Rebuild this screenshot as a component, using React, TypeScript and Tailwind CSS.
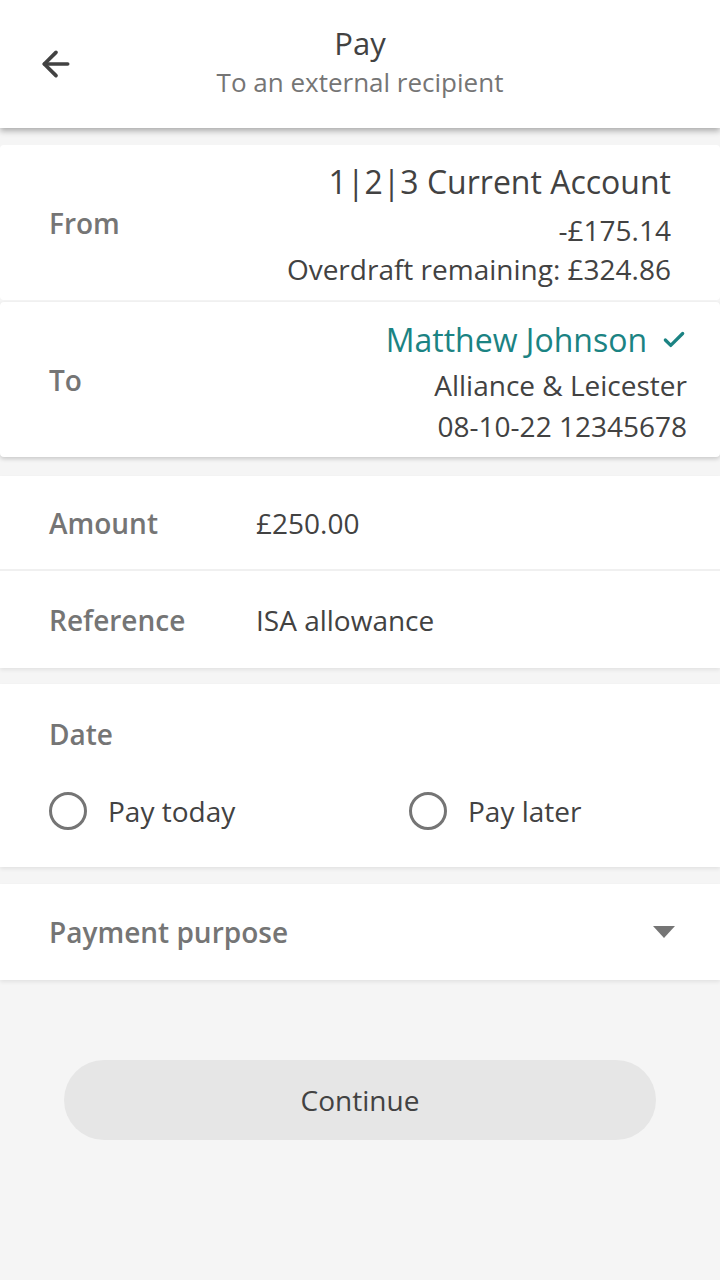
import { ArrowLeft, Check } from "lucide-react";

const font = { fontFamily: '"Open Sans", "Liberation Sans", sans-serif' };

const Radio = ({ label }: { label: string }) => (
    <div className="flex items-center gap-[21px]">
        <span className="block w-[38px] h-[38px] rounded-full border-[3px] border-[#757575]" />
        <span className="text-[28px] text-[#424242]">{label}</span>
    </div>
);

const App = () => {
    return (
        <div className="min-h-[1280px] bg-[#f5f5f5]" style={font}>
            <header className="relative h-[128px] bg-white shadow-[0_3px_6px_rgba(0,0,0,0.3)] flex flex-col items-center justify-center z-10">
                <ArrowLeft className="absolute left-[36px] top-[44px] text-[#424242]" size={40} strokeWidth={2.2} />
                <h1 className="text-[31px] leading-[40px] text-[#424242] -mt-[4px]">Pay</h1>
                <p className="text-[26px] leading-[38px] text-[#757575]">To an external recipient</p>
            </header>

            <section className="mt-[17px] bg-white rounded-[4px] h-[155px] flex items-center pl-[49px] pr-[49px]">
                <span className="text-[28px] font-semibold text-[#757575]">From</span>
                <div className="ml-auto -mt-[4px] flex flex-col items-end text-[#424242]">
                    <span className="text-[32px] leading-[48px]">1|2|3 Current Account</span>
                    <span className="text-[28px] leading-[48px]">-£175.14</span>
                    <span className="text-[28px] leading-[30px]">Overdraft remaining: £324.86</span>
                </div>
            </section>

            <section className="mt-[2px] bg-white rounded-[4px] h-[155px] flex items-center pl-[49px] pr-[33px] shadow-[0_2px_4px_rgba(0,0,0,0.18)]">
                <span className="text-[28px] font-semibold text-[#757575]">To</span>
                <div className="ml-auto pt-[3px] flex flex-col items-end text-[#424242]">
                    <span className="flex items-center gap-[14px] text-[32px] leading-[46px] text-[#1b8383]">
                        Matthew Johnson
                        <Check size={26} strokeWidth={3} />
                    </span>
                    <span className="text-[28px] leading-[44px]">Alliance &amp; Leicester</span>
                    <span className="text-[28px] leading-[38px]">08-10-22 12345678</span>
                </div>
            </section>

            <section className="mt-[19px] bg-white shadow-[0_2px_4px_rgba(0,0,0,0.08)]">
                <div className="h-[95px] flex items-center pl-[49px] border-b-2 border-[#f0f0f0]">
                    <span className="w-[207px] text-[28px] font-semibold text-[#757575]">Amount</span>
                    <span className="text-[28px] text-[#424242]">£250.00</span>
                </div>
                <div className="h-[97px] flex items-center pl-[49px]">
                    <span className="w-[207px] text-[28px] font-semibold text-[#757575]">Reference</span>
                    <span className="text-[28px] text-[#424242]">ISA allowance</span>
                </div>
            </section>

            <section className="mt-[16px] bg-white h-[183px] pl-[49px] pt-[30px] shadow-[0_2px_4px_rgba(0,0,0,0.08)]">
                <span className="block text-[28px] leading-[40px] font-semibold text-[#757575]">Date</span>
                <div className="mt-[36px] flex">
                    <div className="w-[360px]">
                        <Radio label="Pay today" />
                    </div>
                    <Radio label="Pay later" />
                </div>
            </section>

            <section className="mt-[17px] bg-white h-[96px] flex items-center pl-[49px] pr-[45px] shadow-[0_2px_4px_rgba(0,0,0,0.08)]">
                <span className="text-[28px] font-semibold text-[#757575]">Payment purpose</span>
                <svg className="ml-auto" width="22" height="12" viewBox="0 0 22 12">
                    <path d="M0 0 L22 0 L11 12 Z" fill="#757575" />
                </svg>
            </section>

            <div className="px-[64px] pt-[80px]">
                <button className="w-full h-[80px] rounded-full bg-[#e6e6e6] text-[28px] text-[#424242]">Continue</button>
            </div>
        </div>
    );
};

export default App;
